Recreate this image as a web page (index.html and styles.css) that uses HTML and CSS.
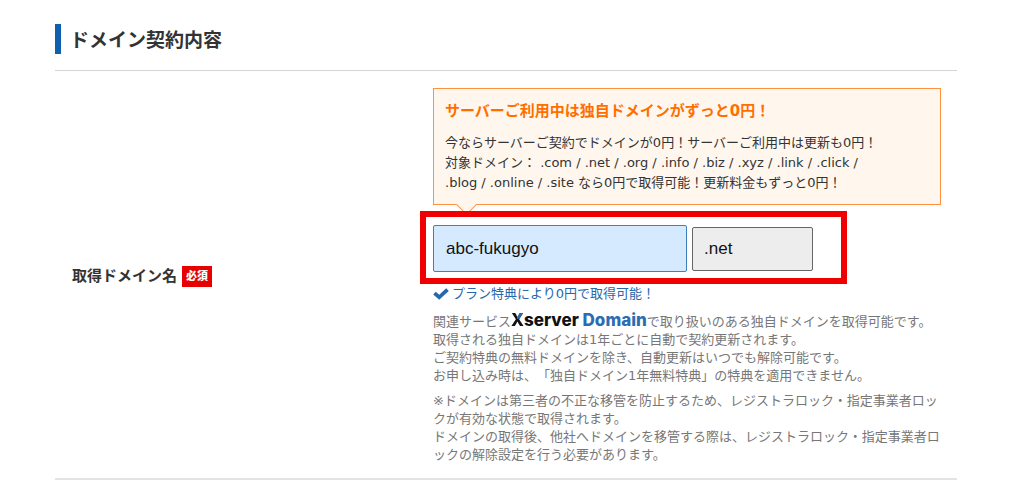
FILE: index.html
```html
<!DOCTYPE html>
<html lang="ja">
<head>
<meta charset="utf-8">
<meta name="viewport" content="width=device-width, initial-scale=1">
<title>ドメイン契約内容</title>
<link rel="stylesheet" href="styles.css">
</head>
<body>
<main class="section">
  <header class="section-head">
    <h1 class="section-title">ドメイン契約内容</h1>
  </header>
  <form class="row">
    <div class="row-label">
      <label for="domain">取得ドメイン名</label>
      <span class="required">必須</span>
    </div>
    <div class="row-body">
      <div class="bubble">
        <h2 class="bubble-title">サーバーご利用中は独自ドメインがずっと0円！</h2>
        <p class="bubble-text">今ならサーバーご契約でドメインが0円！サーバーご利用中は更新も0円！<br>対象ドメイン： .com / .net / .org / .info / .biz / .xyz / .link / .click /<br>.blog / .online / .site なら0円で取得可能！更新料金もずっと0円！</p>
      </div>
      <div class="fields">
        <input class="domain" id="domain" type="text" value="abc-fukugyo">
        <select class="tld" aria-label="ドメインの種類"><option>.net</option></select>
      </div>
      <p class="status">
        <svg class="check" viewBox="0 0 16 12" aria-hidden="true"><path d="M0.2 6.4 2.8 3.8 6.2 6.8 13.2 0.3 15.8 2.9 6.2 11.8Z"/></svg>
        <span>プラン特典により0円で取得可能！</span>
      </p>
      <p class="note">関連サービス<a class="logo" href="#"><span class="logo-x">X</span>server <span class="logo-domain">Domain</span></a>で取り扱いのある独自ドメインを取得可能です。<br>取得される独自ドメインは1年ごとに自動で契約更新されます。<br>ご契約特典の無料ドメインを除き、自動更新はいつでも解除可能です。<br>お申し込み時は、「独自ドメイン1年無料特典」の特典を適用できません。</p>
      <p class="note">※ドメインは第三者の不正な移管を防止するため、レジストラロック・指定事業者ロックが有効な状態で取得されます。<br>ドメインの取得後、他社へドメインを移管する際は、レジストラロック・指定事業者ロックの解除設定を行う必要があります。</p>
    </div>
  </form>
</main>
</body>
</html>
```
FILE: styles.css
```css
* { box-sizing: border-box; }

body {
  margin: 0;
  background: #fff;
  color: #333;
  font-family: "DejaVu Sans", "Noto Sans CJK JP", sans-serif;
  font-size: 13px;
  line-height: 18px;
  text-spacing-trim: space-all;
}

h1, h2, p { margin: 0; }

.section { padding: 24px 67px 0 55px; }

.section-head {
  padding-bottom: 16px;
  border-bottom: 1px solid #d4d4d4;
}

.section-title {
  padding-left: 9px;
  border-left: 6px solid #1160ad;
  font-family: "Noto Sans CJK JP", sans-serif;
  font-size: 19px;
  font-weight: 700;
  line-height: 30px;
}

.row {
  display: grid;
  grid-template-columns: 361px minmax(0, 1fr);
  align-items: center;
  padding: 17px 16px 14px 17px;
  border-bottom: 2px solid #e3e3e3;
}

.row-label {
  display: flex;
  align-items: center;
  gap: 5px;
  font-size: 15px;
  font-weight: 700;
}

.required {
  padding: 0 4px;
  background: #e60000;
  color: #fff;
  font-size: 11px;
  font-weight: 900;
  line-height: 21px;
}

.bubble {
  position: relative;
  padding: 12px 11px 11px;
  border: 1px solid #ff9140;
  background: #fff7ee;
}

.bubble::after {
  content: "";
  position: absolute;
  left: 25px;
  bottom: -8px;
  width: 14px;
  height: 14px;
  border: solid #ff9140;
  border-width: 0 1px 1px 0;
  background: #fff7ee;
  transform: rotate(45deg);
}

.bubble-title {
  margin-bottom: 12px;
  color: #ff6f00;
  font-size: 15px;
  font-weight: 700;
  line-height: 20px;
}

.bubble-text { line-height: 20px; }

.fields {
  position: relative;
  display: flex;
  align-items: center;
  gap: 5px;
  width: fit-content;
  margin-top: 20px;
}

.fields::after {
  content: "";
  position: absolute;
  inset: -14px -34px -12px -13px;
  border: 6px solid #f00000;
  pointer-events: none;
}

.domain, .tld {
  appearance: none;
  margin: 0;
  padding: 0 12px;
  border: 1px solid #3f7fbd;
  border-radius: 2px;
  color: #111;
  font: 17px "Liberation Sans", Arial, sans-serif;
}

.domain {
  width: 254px;
  height: 47px;
  background: #d6eaff;
}

.tld {
  width: 121px;
  height: 44px;
  padding: 0 11px;
  border-color: #666;
  background: #ededed;
}

.status {
  display: flex;
  align-items: center;
  gap: 3px;
  margin-top: 13px;
  color: #2768ac;
}

.check {
  width: 16px;
  height: 12px;
  fill: #2768ac;
}

.note {
  margin-top: 9px;
  color: #777;
}

.note + .note { margin-top: 7px; }

.logo {
  color: #111;
  font-family: Inter, sans-serif;
  font-size: 17px;
  font-weight: 800;
  line-height: 1;
  text-decoration: none;
}

.logo-x {
  background: linear-gradient(#2768ac, #2768ac) top right / 50% 46% no-repeat, #111;
  background-clip: text;
  color: transparent;
}

.logo-domain { color: #2b6db3; }
```
